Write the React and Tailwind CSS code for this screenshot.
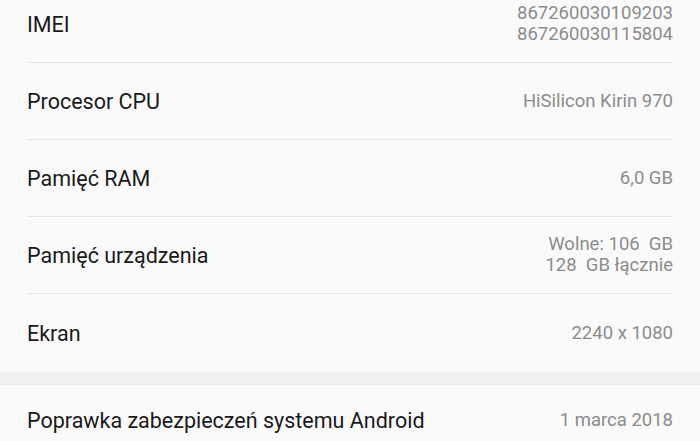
export default function App() {
  const rows = [
    { label: 'IMEI', value: ['867260030109203', '867260030115804'] },
    { label: 'Procesor CPU', value: ['HiSilicon Kirin 970'] },
    { label: 'Pamięć RAM', value: ['6,0 GB'] },
    { label: 'Pamięć urządzenia', value: ['Wolne: 106  GB', '128  GB łącznie'] },
    { label: 'Ekran', value: ['2240 x 1080'] },
  ];

  return (
    <div className="w-[700px] h-[441px] overflow-hidden bg-[#fafafa] font-['Roboto',sans-serif]">
      <div className="-mt-[14px]">
        {rows.map((row, i) => (
          <div key={i} className="px-[27px]">
            <div
              className={`flex items-center justify-between ${
                i < rows.length - 1 ? 'h-[77px] border-b border-[#e6e6e6]' : 'h-[78px]'
              }`}
            >
              <span className="text-[21.5px] text-[#1a1a1a] pt-[3px]">{row.label}</span>
              <div className="flex flex-col items-end text-[18.5px] leading-[21px] text-[#8c8c8c] whitespace-pre">
                {row.value.map((v, j) => (
                  <span key={j}>{v}</span>
                ))}
              </div>
            </div>
          </div>
        ))}
      </div>

      {/* section gap */}
      <div className="h-[13px] bg-[#f0f0f0]" />

      <div className="px-[27px]">
        <div className="flex items-center justify-between h-[72px]">
          <span className="text-[21.5px] text-[#1a1a1a]">Poprawka zabezpieczeń systemu Android</span>
          <span className="text-[18.5px] text-[#8c8c8c]">1 marca 2018</span>
        </div>
      </div>
    </div>
  );
}
